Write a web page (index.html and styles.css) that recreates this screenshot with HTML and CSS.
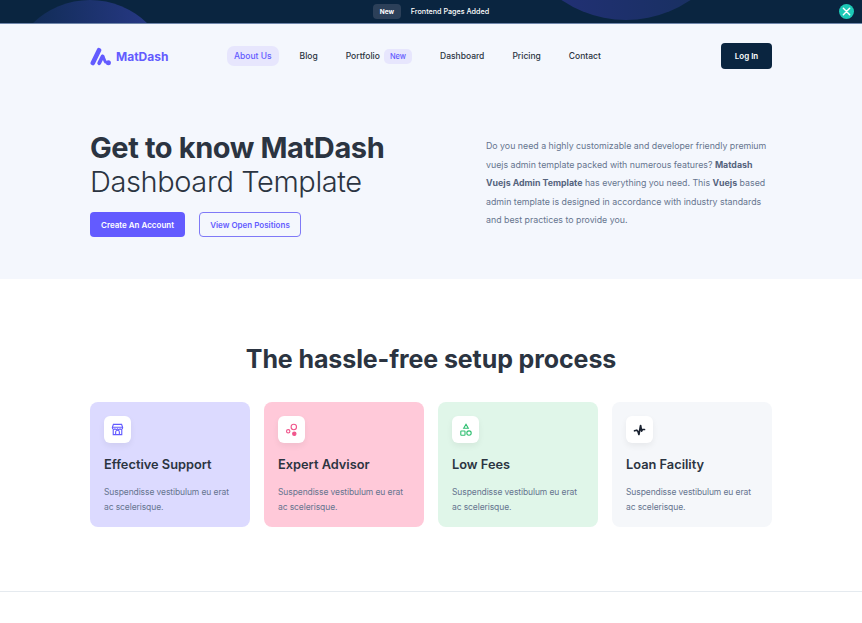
FILE: index.html
```html
<!DOCTYPE html>
<html lang="en">
<head>
  <meta charset="UTF-8">
  <meta name="viewport" content="width=device-width, initial-scale=1.0">
  <title>MatDash</title>
  <link rel="stylesheet" href="styles.css">
</head>
<body>
  <!-- Announcement bar -->
  <div class="topbar">
    <span class="glow glow-left"></span>
    <span class="glow glow-right"></span>
    <span class="topbar-badge">New</span>
    <span class="topbar-text">Frontend Pages Added</span>
    <button class="topbar-close" aria-label="Close">
      <svg width="9" height="9" viewBox="0 0 10 10"><path d="M1.5 1.5l7 7M8.5 1.5l-7 7" stroke="#fff" stroke-width="1.6" stroke-linecap="round"/></svg>
    </button>
  </div>

  <section class="hero">
    <div class="container">
      <nav class="navbar">
        <a class="logo" href="#home">
          <svg width="22" height="19" viewBox="0 0 22 19" fill="none" stroke="#635bff" stroke-linecap="round"><path d="M2.800 16L9 3.200" stroke-width="4.600"/><path d="M9.200 16.200L12.600 9.400" stroke-width="3.800"/><path d="M12.600 9.400c1.400.6 1.600 4.400 3 5.600" stroke-width="3"/><circle cx="18.400" cy="15.800" r="2.500" fill="#635bff" stroke="none"/></svg>
          <span>MatDash</span>
        </a>
        <ul class="nav-links">
          <li><a class="active" href="#about">About Us</a></li>
          <li><a href="#blog">Blog</a></li>
          <li class="nav-portfolio"><a href="#portfolio">Portfolio</a><span class="nav-badge">New</span></li>
          <li><a href="#dashboard">Dashboard</a></li>
          <li><a href="#pricing">Pricing</a></li>
          <li><a href="#contact">Contact</a></li>
        </ul>
        <a class="login" href="#login">Log In</a>
      </nav>

      <div class="hero-main">
        <div class="hero-left">
          <h1><strong>Get to know MatDash</strong><br>Dashboard Template</h1>
          <div class="hero-buttons">
            <a class="btn btn-primary" href="#create">Create An Account</a>
            <a class="btn btn-outline" href="#positions">View Open Positions</a>
          </div>
        </div>
        <p class="hero-text">Do you need a highly customizable and developer friendly premium<br>vuejs admin template packed with numerous features? <b>Matdash</b><br><b>Vuejs Admin Template</b> has everything you need. This <b>Vuejs</b> based<br>admin template is designed in accordance with industry standards<br>and best practices to provide you.</p>
      </div>
    </div>
  </section>

  <section class="setup">
    <div class="container">
      <h2>The hassle-free setup process</h2>
      <div class="cards">
        <div class="card card-purple">
          <div class="card-icon">
            <svg width="13" height="13" viewBox="0 0 14 14" fill="none" stroke="#635bff" stroke-width="1.2"><path d="M2.600 1.500h8.800l1.100 3.200v.6a1.600 1.600 0 0 1-2.750 1 1.800 1.800 0 0 1-2.750 0 1.800 1.800 0 0 1-2.750 0A1.600 1.600 0 0 1 1.500 5.300v-.6z"/><path d="M1.500 4.600h11M2.400 7v5.500h9.200V7M5 12.500V9.800a2 2 0 0 1 4 0v2.700"/></svg>
          </div>
          <h3>Effective Support</h3>
          <p>Suspendisse vestibulum eu erat ac scelerisque.</p>
        </div>
        <div class="card card-pink">
          <div class="card-icon">
            <svg width="14" height="14" viewBox="0 0 14 14" fill="none" stroke="#f0568c" stroke-width="1.1"><circle cx="8.800" cy="4" r="2.700"/><circle cx="3.200" cy="8.300" r="1.700"/><circle cx="9.300" cy="10.800" r="1.700" fill="#f0568c"/></svg>
          </div>
          <h3>Expert Advisor</h3>
          <p>Suspendisse vestibulum eu erat ac scelerisque.</p>
        </div>
        <div class="card card-green">
          <div class="card-icon">
            <svg width="14" height="14" viewBox="0 0 14 14" fill="none" stroke="#2fbf71" stroke-width="1.1"><path d="M7 1.300l2.300 4H4.700z"/><rect x="1.800" y="8" width="4.200" height="4.200" rx=".5"/><circle cx="10" cy="10.100" r="2.200"/></svg>
          </div>
          <h3>Low Fees</h3>
          <p>Suspendisse vestibulum eu erat ac scelerisque.</p>
        </div>
        <div class="card card-gray">
          <div class="card-icon">
            <svg width="14" height="14" viewBox="0 0 14 14" fill="none" stroke="#1a2230" stroke-width="1.700" stroke-linecap="round" stroke-linejoin="round"><path d="M1.500 7.800l2.200-.6 1.300 1.300.9 3 1.700-9 1 5.600.8-1.600h2.100"/></svg>
          </div>
          <h3>Loan Facility</h3>
          <p>Suspendisse vestibulum eu erat ac scelerisque.</p>
        </div>
      </div>
    </div>
  </section>

  <hr class="divider">
</body>
</html>
```

FILE: styles.css
```css
* {
  padding: 0;
  margin: 0;
  box-sizing: border-box;
}

html, body {
  height: 623px;
  overflow: hidden;
}

body {
  font-family: Inter, "Noto Sans", sans-serif;
  background-color: #fff;
  color: #2b3441;
}

a {
  text-decoration: none;
  color: inherit;
}

.container {
  width: 682px;
  margin: 0 auto;
}

/* Announcement bar */
.topbar {
  position: relative;
  height: 24px;
  overflow: hidden;
  display: flex;
  align-items: center;
  justify-content: center;
  gap: 10px;
  background-color: #0a2540;
  border-bottom: 1px solid #6f86ab;
  color: #fff;
  font-size: 7.2px;
  font-weight: 500;
}

.glow {
  position: absolute;
  border-radius: 50%;
}

.glow-left {
  left: 8px;
  top: 0;
  width: 164px;
  height: 164px;
  background: linear-gradient(90deg, #0d2a4e, #2a3a8c);
}

.glow-right {
  left: 512px;
  top: -208px;
  width: 228px;
  height: 228px;
  background: linear-gradient(90deg, #24307a, #16305c);
}

.topbar-badge, .topbar-text {
  position: relative;
}

.topbar-badge {
  width: 28px;
  height: 15px;
  display: flex;
  align-items: center;
  justify-content: center;
  font-size: 6.500px;
  font-weight: 700;
  border-radius: 4px;
  background-color: #2c4059;
}

.topbar-close {
  position: absolute;
  right: 8px;
  top: 4px;
  width: 15px;
  height: 15px;
  display: flex;
  align-items: center;
  justify-content: center;
  border: none;
  border-radius: 50%;
  background-color: #1dc9b7;
}

/* Hero */
.hero {
  height: 255px;
  background-color: #f4f7fd;
}

.navbar {
  height: 64px;
  display: flex;
  align-items: center;
}

.logo {
  width: 137px;
  display: flex;
  align-items: center;
  gap: 4px;
  color: #635bff;
  font-size: 12px;
  font-weight: 700;
}

.nav-links {
  list-style-type: none;
  flex: 1;
  display: flex;
  align-items: center;
  font-size: 8.500px;
  font-weight: 500;
}

.nav-links li {
  margin-right: 14px;
}

.nav-links a {
  display: block;
  padding: 5px 7px;
  border-radius: 7px;
}

.nav-links a.active {
  color: #635bff;
  background-color: #e7e6fd;
}

.nav-links .nav-portfolio {
  display: flex;
  align-items: center;
  gap: 4px;
  margin-right: 21px;
}

.nav-links .nav-portfolio a {
  padding-right: 0;
}

.nav-badge {
  padding: 3px 6px;
  font-size: 7.500px;
  border-radius: 5px;
  color: #635bff;
  background-color: #e7e6fd;
}

.login {
  width: 51px;
  height: 26px;
  display: flex;
  align-items: center;
  justify-content: center;
  border-radius: 4px;
  font-size: 8px;
  font-weight: 600;
  color: #fff;
  background-color: #0a2540;
}

.hero-main {
  margin-top: 43px;
  display: flex;
  justify-content: space-between;
}

.hero-left h1 {
  font-size: 29px;
  line-height: 34px;
  font-weight: 300;
  letter-spacing: -0.4px;
}

.hero-left h1 strong {
  font-weight: 700;
}

.hero-buttons {
  margin-top: 13px;
  display: flex;
  gap: 14px;
}

.btn {
  height: 25px;
  display: flex;
  align-items: center;
  justify-content: center;
  border-radius: 4px;
  font-size: 8px;
  font-weight: 600;
}

.btn-primary {
  width: 95px;
  color: #fff;
  background-color: #635bff;
}

.btn-outline {
  width: 102px;
  color: #635bff;
  border: 1px solid #7f79f7;
}

.hero-text {
  width: 286px;
  margin-top: 6px;
  font-size: 8.800px;
  line-height: 18.500px;
  color: #66758f;
}

.hero-text b {
  font-weight: 700;
  color: #55647d;
}

/* Setup section */
.setup h2 {
  margin-top: 64px;
  font-size: 25px;
  line-height: 33px;
  font-weight: 700;
  letter-spacing: -0.1px;
  text-align: center;
}

.cards {
  margin-top: 26px;
  display: grid;
  grid-template-columns: repeat(4, 160px);
  gap: 14px;
}

.card {
  height: 125px;
  padding: 14px;
  border-radius: 8px;
}

.card-purple { background-color: #dcdaff; }
.card-pink { background-color: #ffc9d9; }
.card-green { background-color: #e0f6e9; }
.card-gray { background-color: #f5f7fa; }

.card-icon {
  width: 27px;
  height: 27px;
  display: flex;
  align-items: center;
  justify-content: center;
  border-radius: 6px;
  background-color: #fff;
  box-shadow: 0 3px 6px rgba(0, 0, 0, 0.06);
}

.card h3 {
  margin-top: 13px;
  font-size: 12.800px;
  line-height: 18px;
  font-weight: 600;
}

.card p {
  margin-top: 11px;
  font-size: 8.500px;
  letter-spacing: -0.1px;
  line-height: 14.500px;
  color: #66758f;
}

.divider {
  margin-top: 64px;
  border: none;
  border-top: 1px solid #e5eaef;
}
```
